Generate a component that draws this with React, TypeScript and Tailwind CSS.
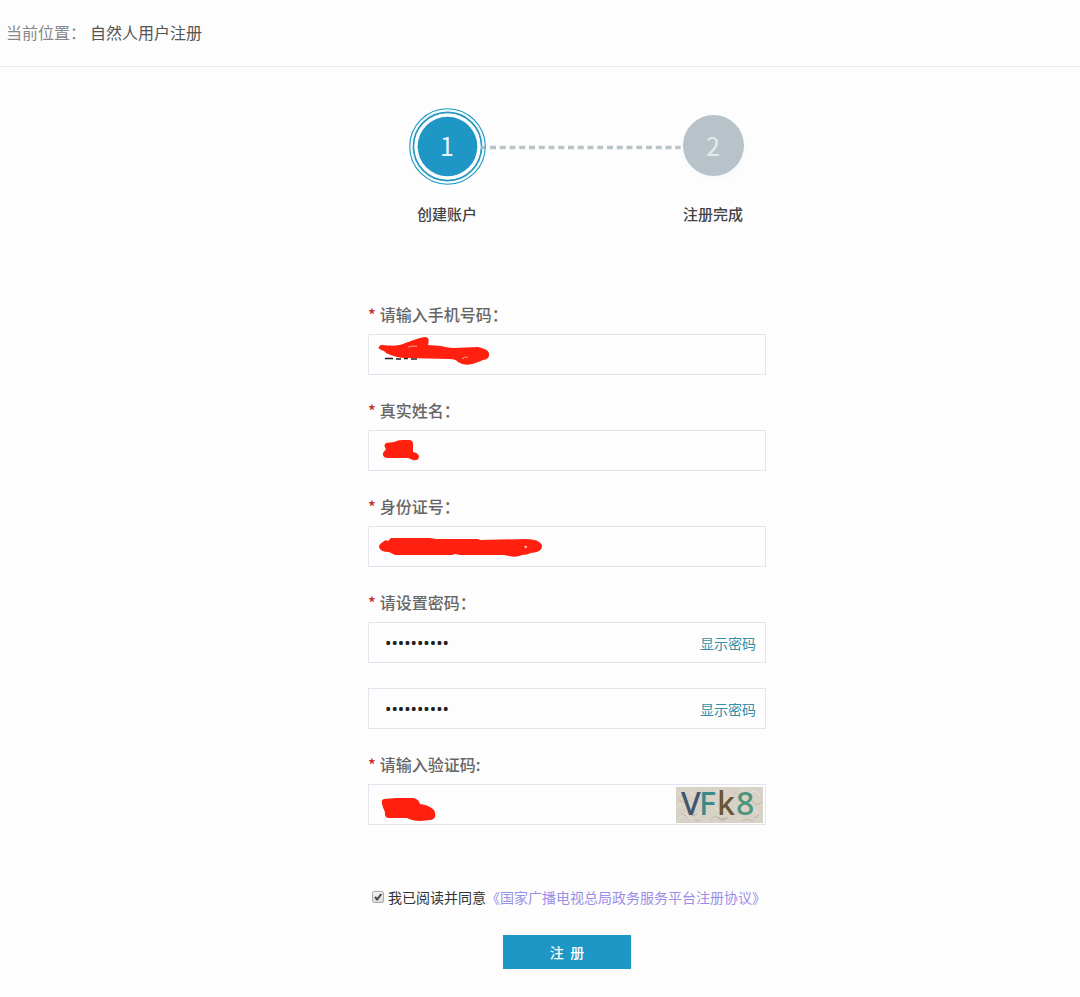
import { useState, type ReactNode } from "react";

const steps = [
  { no: "1", label: "创建账户", active: true },
  { no: "2", label: "注册完成", active: false },
];

const inputClass =
  "block w-full h-[41px] border border-[#e4e4ee] bg-transparent pl-4 pr-20 font-['Noto_Sans',sans-serif] text-[17px] text-[#222] outline-none";

function Label({ htmlFor, children }: { htmlFor: string; children: ReactNode }) {
  return (
    <label htmlFor={htmlFor} className="flex h-[30px] gap-1 text-base leading-5 font-medium text-[#666]">
      <span className="text-[#c9302c]">*</span>
      {children}
    </label>
  );
}

function StepCircle({ no, active }: { no: string; active: boolean }) {
  return (
    <span className="relative flex h-[77px] w-[77px] items-center justify-center pb-1">
      <svg className="absolute inset-0" width="77" height="77" viewBox="0 0 77 77" aria-hidden="true">
        {active ? (
          <>
            <circle cx="38.5" cy="38.5" r="37.8" fill="#f0fcff" stroke="#1f97c4" strokeWidth="1.1" />
            <circle cx="38.5" cy="38.5" r="34" fill="#fdfdfd" stroke="#2b98bd" strokeWidth="1.8" />
            <path d="M5 39.5h5M67 39.5h9" stroke="#8fc3d4" strokeWidth="3" />
            <circle cx="38.5" cy="38.5" r="31.5" fill="none" stroke="#fdfdfd" strokeWidth="3" />
            <circle cx="38.5" cy="38.5" r="29.8" fill="#1f97c6" />
          </>
        ) : (
          <>
            <circle cx="38.5" cy="40" r="33" fill="#f9fbfd" />
            <circle cx="38.5" cy="37.5" r="30.5" fill="#b7c3c8" />
          </>
        )}
      </svg>
      <span className={active ? "relative text-[25px] leading-8 text-[#e4f7fd]" : "relative text-[25px] leading-8 text-[#e3eaed]"}>
        {no}
      </span>
    </span>
  );
}

function PasswordField({ id, label }: { id: string; label: string }) {
  const [visible, setVisible] = useState(false);

  return (
    <div className="relative">
      <input
        id={id}
        type={visible ? "text" : "password"}
        defaultValue="abcd123456"
        aria-label={label}
        className={inputClass}
      />
      <button
        type="button"
        className="absolute right-[10px] inset-y-0 text-sm text-[#3390a8] cursor-pointer"
        onClick={() => setVisible(!visible)}
      >
        显示密码
      </button>
    </div>
  );
}

function Captcha() {
  return (
    <svg className="absolute right-[3px] top-[3px] overflow-visible" width="87" height="36" viewBox="0 0 87 36" role="img" aria-label="验证码">
      <rect width="87" height="36" fill="#d8d1c5" />
      <g fill="none" strokeWidth="1">
        <path d="M2 5l6 3 4-4 7 5M1 20l5-4 6 5 4-3M20 30l6-5 5 3M30 4l5 4 6-5 3 4M66 3l5 4 8-3 5 5M70 28l5-6 8 4M38 20l4 4M3 31l7-4 6 5" stroke="#e9e4da" />
        <path d="M3 13l5 3 5-3M12 25l4 4 6-2M34 33l5-4 7 3 5-2M57 4l4 3M76 14l5 4 5-3M66 34l5-2 6 2M18 33l6 1M45 33l8-2" stroke="#c2baab" />
        <path d="M6 27l4 2M41 30l4 3 5-1M78 31l5-3M28 15l4 3M5 8l3 2" stroke="#b5afa2" />
      </g>
      <g fontFamily="'Noto Sans', sans-serif" fontSize="32" fontWeight="500">
        <text x="5" y="28" fill="#3f5670">V</text>
        <text x="23" y="28" fill="#3b8b88">F</text>
        <text x="41" y="28" fill="#6b5532">k</text>
        <text x="60" y="28" fill="#4e947f">8</text>
      </g>
    </svg>
  );
}

export default function App() {
  const [agreed, setAgreed] = useState(true);

  return (
    <div lang="zh-CN" className="min-h-screen bg-[#fdfdfd] font-['Noto_Sans_CJK_SC',sans-serif]">
      <header className="flex h-[67px] items-center gap-1 border-b border-[#ececec] px-[6px] pb-[2px] text-base text-[#555]">
        <span className="text-[#888]">当前位置：</span>
        <span>自然人用户注册</span>
      </header>

      {/* Progress */}
      <div className="flex justify-center pt-[41px] pl-20">
        <ol className="flex">
          {steps.map((step) => (
            <li key={step.no} className="flex">
              {!step.active && (
                <svg className="mt-9 -mr-2" width="197" height="6" viewBox="0 0 197 6" aria-hidden="true">
                  <path d="M4 3.5H197" stroke="#bac3c5" strokeWidth="3.6" strokeDasharray="6 3.75" />
                </svg>
              )}
              <div className="flex w-[77px] flex-col items-center">
                <StepCircle no={step.no} active={step.active} />
                <span className="mt-[19px] text-[15px] leading-5 font-medium whitespace-nowrap text-[#444]">{step.label}</span>
              </div>
            </li>
          ))}
        </ol>
      </div>

      <form className="flex justify-center pt-20 pl-[54px]" onSubmit={(e) => e.preventDefault()}>
        <div className="flex w-full max-w-[398px] flex-col gap-[25px]">
          <div>
            <Label htmlFor="phone">请输入手机号码：</Label>
            <div className="relative">
              <input id="phone" type="tel" className={inputClass} />
              <svg className="absolute left-2 top-0 pointer-events-none" width="120" height="40" viewBox="0 0 120 40" aria-hidden="true">
                <path d="M9 24.5h8M20 25h5M28 24.5h4M35 25h6" stroke="#222" strokeWidth="1.6" />
                <path
                  d="M5 11C8 11 20 13 27 10C35 7 44 3 50 3Q54 4 52 11L65 12Q72 14 78 14L102 13Q112 15 113 19Q114 25 107 26Q100 29 96 30Q88 32 82 28Q80 25 73 25L30 24Q20 24 10 19L8 17Q-1 14 5 11Z"
                  fill="#ff2010"
                />
                <path d="M32 13l5-1 4 .5M86 25l3-2 3 .5" fill="none" stroke="#ff9a8d" strokeWidth="1" />
              </svg>
            </div>
          </div>

          <div>
            <Label htmlFor="realName">真实姓名：</Label>
            <div className="relative">
              <input id="realName" type="text" className={inputClass} />
              <svg className="absolute left-2 top-0 pointer-events-none" width="60" height="40" viewBox="0 0 60 40" aria-hidden="true">
                <path
                  d="M10 13L18 12Q22 10 26 10H34Q38 11 37 17V22Q43 23 43 27Q42 31 37 30L32 28H11Q6 27 7 23L10 19Q7 15 10 13Z"
                  fill="#ff2010"
                />
              </svg>
            </div>
          </div>

          <div>
            <Label htmlFor="idCard">身份证号：</Label>
            <div className="relative">
              <input id="idCard" type="text" className={inputClass} />
              <svg className="absolute left-2 top-0 pointer-events-none" width="180" height="40" viewBox="0 0 180 40" aria-hidden="true">
                <path
                  d="M7 16Q9 13 12 15L15 12L54 12L60 13H102L104 14L150 13Q163 13 166 19Q167 26 155 27Q151 29 146 29Q140 32 133 30L128 29H84L79 28L76 29H19L13 26Q4 26 3 21Q3 18 7 16Z"
                  fill="#ff2010"
                />
                <path d="M148 20h3l-1 3z" fill="#ffd8d2" />
              </svg>
            </div>
          </div>

          <div>
            <Label htmlFor="password">请设置密码：</Label>
            <PasswordField id="password" label="请设置密码" />
          </div>

          <PasswordField id="passwordAgain" label="确认密码" />

          <div>
            <Label htmlFor="captcha">请输入验证码:</Label>
            <div className="relative">
              <input id="captcha" type="text" className={inputClass} />
              <svg className="absolute left-2 top-0 pointer-events-none" width="70" height="40" viewBox="0 0 70 40" aria-hidden="true">
                <path
                  d="M8 15L20 14H37Q43 15 44 20Q53 21 58 26Q62 35 54 36L45 37Q36 37 31 34H12Q8 33 9 28Q5 20 6 16Z"
                  fill="#ff2010"
                />
                <path d="M51 29l1 1" stroke="#b02a1c" strokeWidth="1" />
              </svg>
              <Captcha />
            </div>
          </div>

          <div className="flex flex-col items-center pt-[37px]">
            <div className="flex h-5 w-full items-center pl-1 text-sm whitespace-nowrap">
              <span className="relative mr-1 flex">
                <input
                  id="agree"
                  type="checkbox"
                  checked={agreed}
                  onChange={() => setAgreed(!agreed)}
                  className="h-3 w-3 appearance-none rounded-xs border border-[#aaa] bg-linear-to-b from-[#f2f2f2] to-[#dcdcdc]"
                />
                {agreed && (
                  <svg className="absolute inset-0 pointer-events-none" width="12" height="12" viewBox="0 0 12 12" aria-hidden="true">
                    <path d="M3 6l2.2 2.5L9.3 3" fill="none" stroke="#444" strokeWidth="2" />
                  </svg>
                )}
              </span>
              <label htmlFor="agree" className="text-[#333]">我已阅读并同意</label>
              <a href="#agreement" className="text-[#9a8fe8]">《国家广播电视总局政务服务平台注册协议》</a>
            </div>
            <button
              type="submit"
              className="mt-7 h-[34px] w-32 bg-[#1f97c6] text-sm font-medium whitespace-pre text-white cursor-pointer"
            >
              {"注  册"}
            </button>
          </div>
        </div>
      </form>
    </div>
  );
}
